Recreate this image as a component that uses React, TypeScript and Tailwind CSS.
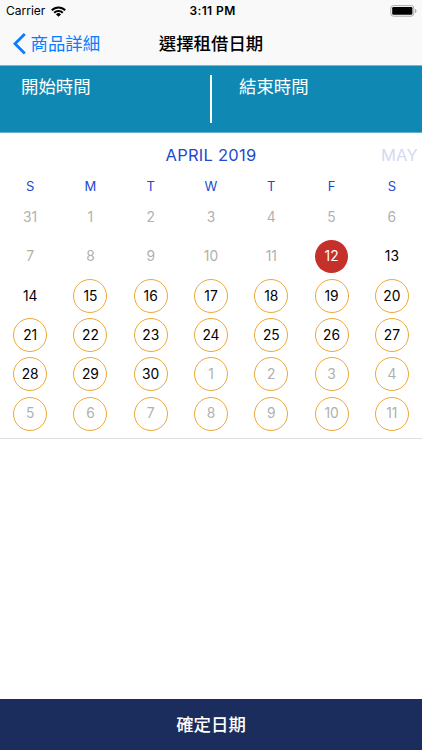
interface DayProps {
  day: number;
  muted: boolean;
  selected: boolean;
  ringed: boolean;
}

const weekdays = ["S", "M", "T", "W", "T", "F", "S"];

// 42 cells, starting on Sunday, March 31
const days = Array.from({ length: 42 }, (_, i) => {
  const date = new Date(2019, 2, 31 + i);
  const inApril = date.getMonth() === 3;
  return {
    day: date.getDate(),
    muted: i < 12 || !inApril,
    selected: i === 12,
    ringed: i > 14,
  };
});

function StatusBar() {
  return (
    <div className="flex h-[22px] items-center justify-between pl-[6px] pr-[5px]">
      <div className="flex w-[120px] items-center gap-[6px]">
        <span className="text-[12px] leading-[22px]">Carrier</span>
        <svg width="15" height="11" viewBox="0 0 15 11" fill="none" stroke="#000" strokeWidth="2">
          <path d="M0.8 4.2a9.4 9.4 0 0 1 13.4 0" />
          <path d="M3.2 6.8a6.1 6.1 0 0 1 8.6 0" />
          <path d="M7.5 10.8 5 8.4a3.5 3.5 0 0 1 5 0Z" fill="#000" stroke="none" />
        </svg>
      </div>
      <span className="pl-[2px] text-[12px] font-semibold leading-[22px] tracking-[0.4px]">3:11 PM</span>
      <div className="flex w-[120px] justify-end">
        <svg width="27" height="12" viewBox="0 0 27 12">
          <rect x="0.8" y="0.6" width="23" height="10.6" rx="2.6" fill="none" stroke="#aaa" />
          <rect x="2.2" y="2" width="20.2" height="7.8" rx="1.2" fill="#000" />
          <path d="M25 4v4c1-.4 1.5-1.1 1.5-2s-.5-1.6-1.5-2Z" fill="#aaa" />
        </svg>
      </div>
    </div>
  );
}

function NavBar() {
  return (
    <div className="grid h-[43px] grid-cols-[1fr_auto_1fr] items-center font-['Noto_Sans_CJK_TC',sans-serif]">
      <button className="flex items-center pl-[13px] text-[17.4px] leading-none text-[#087dff]">
        <svg className="mr-[4.5px]" width="13" height="22" viewBox="0 0 13 22" fill="none">
          <path d="M11.8 1 2 10.8l9.8 9.8" stroke="#087dff" strokeWidth="2.8" />
        </svg>
        <span className="pb-[2px]">商品詳細</span>
      </button>
      <h1 className="pb-[2px] text-[17.4px] font-medium leading-none">選擇租借日期</h1>
      <div />
    </div>
  );
}

function Day({ day, muted, selected, ringed }: DayProps) {
  let look = "size-[34px] border border-transparent text-black";
  if (selected) {
    look = "size-[33px] bg-[#c5302a] text-white";
  } else if (ringed) {
    look = "size-[34px] border border-[#eba937]";
    look += muted ? " text-[#b0b0b0]" : " text-black";
  } else if (muted) {
    look = "size-[34px] text-[#b0b0b0]";
  }

  return (
    <div className="flex h-[39.2px] items-center justify-center">
      <span className={`flex items-center justify-center rounded-full pt-px text-[13.8px] leading-none ${look}`}>
        {day}
      </span>
    </div>
  );
}

function App() {
  return (
    <div className="flex h-[750px] w-[422px] flex-col overflow-hidden bg-white font-['Inter','Noto_Sans_CJK_TC',sans-serif]">
      <header className="h-[66px] border-b border-[#7fb5c9] bg-[#f9f9f9]">
        <StatusBar />
        <NavBar />
      </header>

      <section className="flex h-[67px] items-start border-b border-[#69b0cb] bg-[#0f89b4] pt-[9px] font-['Noto_Sans_CJK_TC',sans-serif] text-[17.4px] text-white">
        <div className="w-[210px] pl-[21px] leading-[22px]">開始時間</div>
        <div className="h-[48px] w-[2px] bg-white" />
        <div className="pl-[27px] leading-[22px]">結束時間</div>
      </section>

      <section className="h-[306px] border-b border-[#dedede]">
        <div className="grid h-[43px] grid-cols-[1fr_auto_1fr] items-center pt-[2px] text-[16.5px] tracking-[0.25px] text-[#2349ce]">
          <span />
          <span>APRIL 2019</span>
          <span className="pr-[4px] text-right text-[#d5d9f3]">MAY</span>
        </div>
        <div className="mb-px grid h-[21px] grid-cols-7 items-center text-center text-[13px] leading-none text-[#2349ce]">
          {weekdays.map((name, i) => (
            <span key={i}>{name}</span>
          ))}
        </div>
        <div className="grid grid-cols-7">
          {days.map((item, i) => (
            <Day key={i} {...item} />
          ))}
        </div>
      </section>

      <button className="mt-auto h-[51px] bg-[#1b2d5c] pb-[2px] font-['Noto_Sans_CJK_TC',sans-serif] text-[17.4px] font-medium leading-none text-white">
        確定日期
      </button>
    </div>
  );
}

export default App;
